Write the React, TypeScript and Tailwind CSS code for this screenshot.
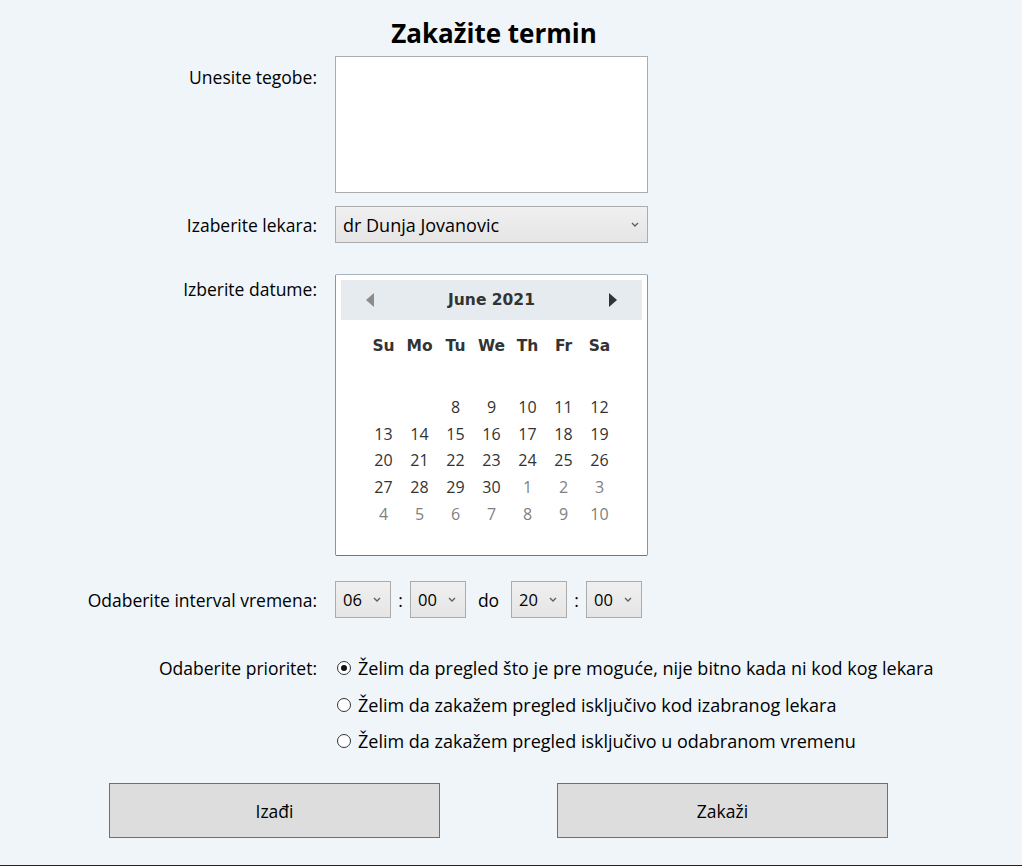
import React from 'react';

const Chevron: React.FC = () => (
  <svg width="8" height="5" viewBox="0 0 8 5" className="shrink-0">
    <path d="M1 1 L4 4 L7 1" fill="none" stroke="#606060" strokeWidth="1.4" />
  </svg>
);

const TimeSelect: React.FC<{ value: string }> = ({ value }) => (
  <div className="flex h-[37px] w-[56px] items-center justify-between border border-[#acacac] bg-gradient-to-b from-[#f0f0f0] to-[#e5e5e5] pl-[7px] pr-[9px] text-[16.5px]">
    <span>{value}</span>
    <Chevron />
  </div>
);

const Radio: React.FC<{ checked?: boolean; label: string }> = ({ checked, label }) => (
  <div className="flex h-[22px] items-center">
    <span className="flex h-[14px] w-[14px] shrink-0 items-center justify-center rounded-full border border-[#333] bg-white">
      {checked && <span className="h-[6px] w-[6px] rounded-full bg-[#111]" />}
    </span>
    <span className="ml-[7px] whitespace-nowrap text-[18px]">{label}</span>
  </div>
);

const days = ['Su', 'Mo', 'Tu', 'We', 'Th', 'Fr', 'Sa'];

const weeks: { d: string; other?: boolean }[][] = [
  [{ d: '' }, { d: '' }, { d: '' }, { d: '' }, { d: '' }, { d: '' }, { d: '' }],
  [{ d: '' }, { d: '' }, { d: '8' }, { d: '9' }, { d: '10' }, { d: '11' }, { d: '12' }],
  [{ d: '13' }, { d: '14' }, { d: '15' }, { d: '16' }, { d: '17' }, { d: '18' }, { d: '19' }],
  [{ d: '20' }, { d: '21' }, { d: '22' }, { d: '23' }, { d: '24' }, { d: '25' }, { d: '26' }],
  [
    { d: '27' }, { d: '28' }, { d: '29' }, { d: '30' },
    { d: '1', other: true }, { d: '2', other: true }, { d: '3', other: true },
  ],
  [
    { d: '4', other: true }, { d: '5', other: true }, { d: '6', other: true }, { d: '7', other: true },
    { d: '8', other: true }, { d: '9', other: true }, { d: '10', other: true },
  ],
];

const Calendar: React.FC = () => (
  <div className="h-[282px] w-[313px] rounded-[2px] border border-[#8896a4] border-t-[#a9b3be] border-b-[#66778a] bg-white p-[5px]">
    <div className="flex h-[40px] items-center justify-between bg-[#e6ebf0] px-[24px]">
      <svg width="10" height="16" viewBox="0 0 10 16">
        <path d="M9 1 L1 8 L9 15 Z" fill="#8c8c8c" />
      </svg>
      <span className="font-['DejaVu_Sans'] text-[15.5px] font-bold text-[#333]">June 2021</span>
      <svg width="10" height="16" viewBox="0 0 10 16">
        <path d="M1 1 L9 8 L1 15 Z" fill="#333" />
      </svg>
    </div>
    <div className="mx-auto mt-[13px] grid w-[252px] grid-cols-7">
      {days.map((d) => (
        <div key={d} className="flex h-[26px] items-center justify-center font-['DejaVu_Sans'] text-[15.5px] font-bold text-[#333]">
          {d}
        </div>
      ))}
    </div>
    <div className="mx-auto mt-[8px] grid w-[252px] grid-cols-7">
      {weeks.flat().map((c, i) => (
        <div
          key={i}
          className={`flex h-[26.7px] items-center justify-center text-[16px] ${c.other ? 'text-[#808080]' : 'text-[#333]'}`}
        >
          {c.d}
        </div>
      ))}
    </div>
  </div>
);

const App: React.FC = () => {
  return (
    <div className="box-border h-[866px] w-full overflow-hidden border-b border-[#222] bg-[#eff5f8] font-['Open_Sans',sans-serif] text-[17.5px] leading-[24px] text-black">
      <h1 className="flex h-[56px] justify-center pr-[34px] pt-[16px] text-[26px] font-bold leading-[34px]">
        Zakažite termin
      </h1>

      <div className="grid grid-cols-[317px_313px] gap-x-[18px]">
        <div className="pt-[9px] text-right">Unesite tegobe:</div>
        <textarea className="h-[137px] w-[313px] resize-none border border-[#acacac] bg-white outline-none" />

        <div className="mt-[13px] flex h-[37px] items-center justify-end">Izaberite lekara:</div>
        <div className="mt-[13px] flex h-[37px] items-center justify-between border border-[#acacac] bg-gradient-to-b from-[#f0f0f0] to-[#e5e5e5] pl-[7px] pr-[8px] text-[18px]">
          <span>dr Dunja Jovanovic</span>
          <Chevron />
        </div>

        <div className="mt-[31px] pt-[3px] text-right">Izberite datume:</div>
        <div className="mt-[31px]">
          <Calendar />
        </div>

        <div className="mt-[25px] flex h-[37px] items-center justify-end">Odaberite interval vremena:</div>
        <div className="mt-[25px] flex items-center">
          <TimeSelect value="06" />
          <span className="w-[19px] text-center">:</span>
          <TimeSelect value="00" />
          <span className="w-[45px] text-center">do</span>
          <TimeSelect value="20" />
          <span className="w-[19px] text-center">:</span>
          <TimeSelect value="00" />
        </div>

        <div className="mt-[39px] flex h-[22px] items-center justify-end">Odaberite prioritet:</div>
        <div className="mt-[39px] flex w-[640px] flex-col gap-[14.5px] pl-[2px]">
          <Radio checked label="Želim da pregled što je pre moguće, nije bitno kada ni kod kog lekara" />
          <Radio label="Želim da zakažem pregled isključivo kod izabranog lekara" />
          <Radio label="Želim da zakažem pregled isključivo u odabranom vremenu" />
        </div>
      </div>

      <div className="mt-[31px] flex gap-[117px] pl-[109px]">
        <button className="h-[55px] w-[331px] border border-[#707070] bg-[#dddddd]">Izađi</button>
        <button className="h-[55px] w-[331px] border border-[#707070] bg-[#dddddd]">Zakaži</button>
      </div>
    </div>
  );
};

export default App;
